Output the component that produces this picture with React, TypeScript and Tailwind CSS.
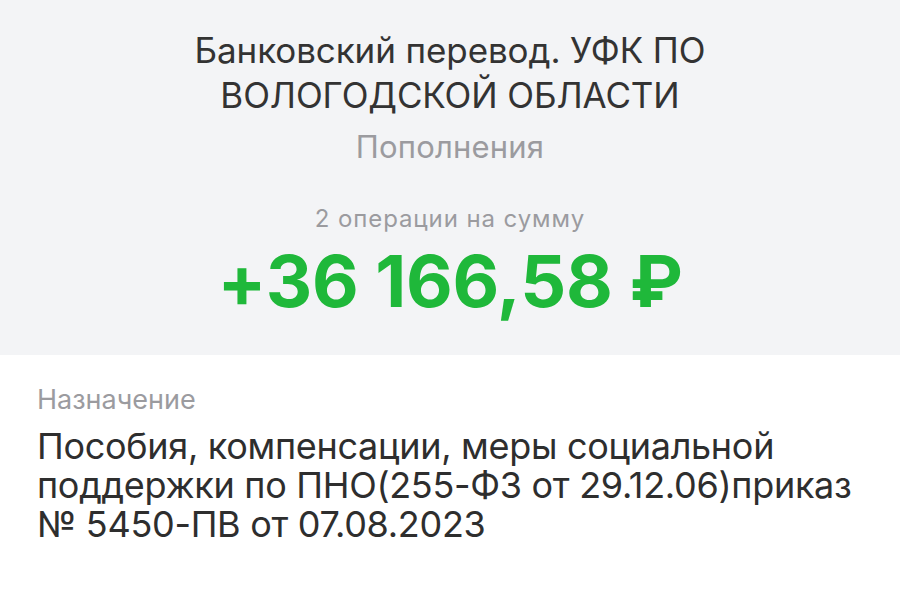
export default function App() {
  return (
    <div className="w-[900px] h-[600px] overflow-hidden bg-white" style={{ fontFamily: "Inter, 'Noto Sans', sans-serif" }}>
      <div className="h-[355px] bg-[#f3f4f6] flex flex-col items-center pt-[28px]">
        <div className="text-[35px] leading-[45px] text-[#333333] text-center tracking-[-0.1px]">
          <div>Банковский перевод. УФК ПО</div>
          <div>ВОЛОГОДСКОЙ ОБЛАСТИ</div>
        </div>
        <div className="mt-[11px] text-[31px] leading-[36px] text-[#9b9b9f] tracking-[0.2px]">Пополнения</div>
        <div className="mt-[40px] text-[24px] leading-[28px] text-[#9b9b9f] tracking-[0.9px]">2 операции на сумму</div>
        <div className="mt-[8px] text-[72px] leading-[80px] font-bold text-[#1fb83a] tracking-[-0.25px]">+36 166,58 ₽</div>
      </div>
      <div className="px-[37px] pt-[29px]">
        <div className="text-[27px] leading-[32px] text-[#9b9b9f]">Назначение</div>
        <div className="mt-[11px] text-[36px] leading-[39px] text-[#2e2e2e] tracking-[-0.3px]">
          <p className="leading-[39px]">Пособия, компенсации, меры социальной</p>
          <p className="leading-[39px]">поддержки по ПНО(255-ФЗ от 29.12.06)приказ</p>
          <p className="leading-[39px]">№ 5450-ПВ от 07.08.2023</p>
        </div>
      </div>
    </div>
  );
}
